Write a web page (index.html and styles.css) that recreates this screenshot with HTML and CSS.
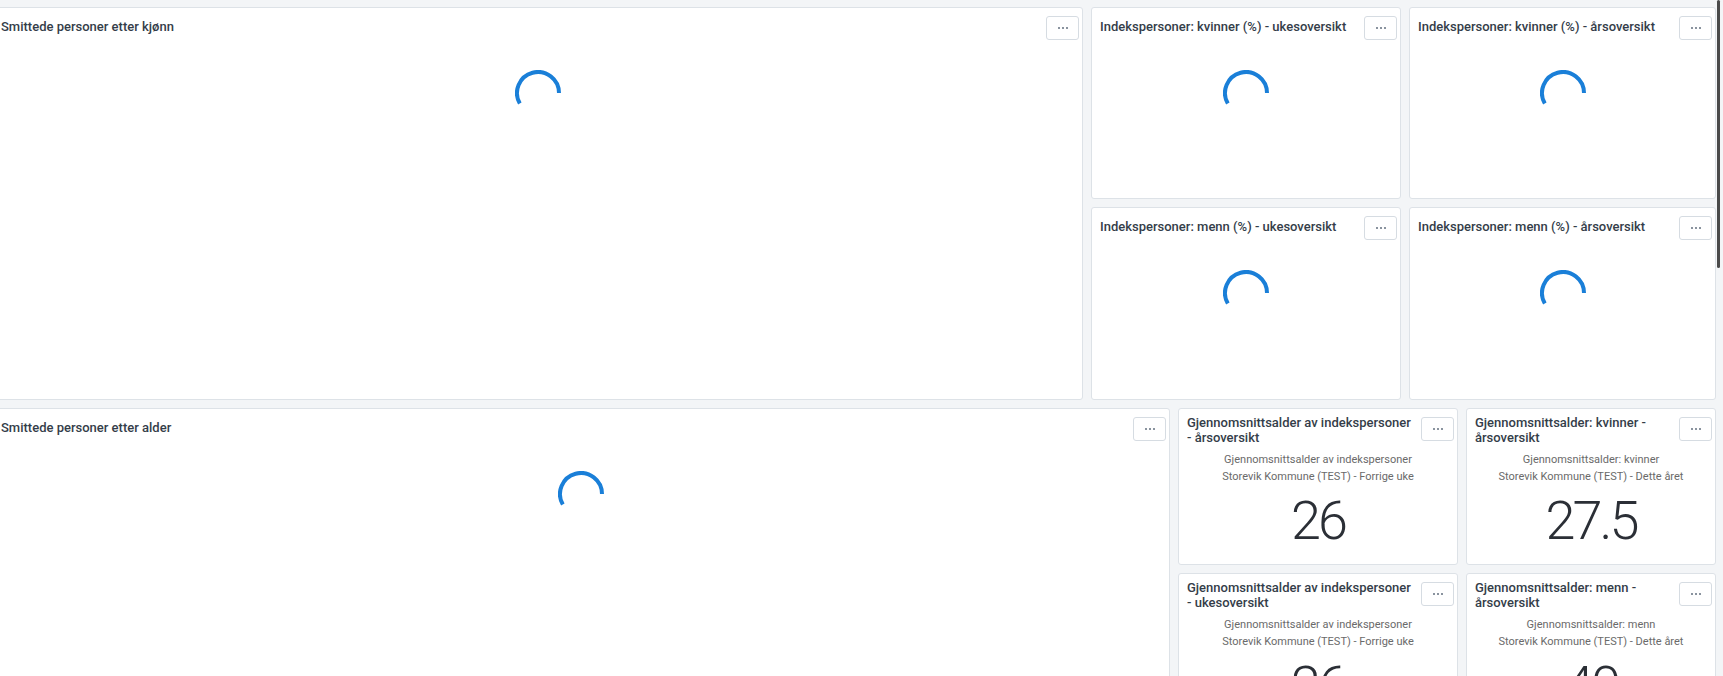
FILE: index.html
```html
<!DOCTYPE html>
<html lang="no">
<head>
<meta charset="utf-8">
<title>Dashboard</title>
<link rel="stylesheet" href="styles.css">
</head>
<body>
<main class="dash">
  <div class="row row-top">
    <section class="card">
      <header class="card-head">
        <h2 class="card-title">Smittede personer etter kjønn</h2>
        <button class="menu-btn" type="button"><svg width="12" height="4" viewBox="0 0 12 4"><circle cx="2" cy="2" r="1.1"/><circle cx="6" cy="2" r="1.1"/><circle cx="10" cy="2" r="1.1"/></svg></button>
      </header>
      <div class="card-body loading"><svg class="spinner" viewBox="0 0 46 46"><path d="M4.81 33.5 A21 21 0 1 1 44 23"/></svg></div>
    </section>
    <div class="quad quad-top">
      <section class="card">
        <header class="card-head">
          <h2 class="card-title">Indekspersoner: kvinner (%) - ukesoversikt</h2>
          <button class="menu-btn" type="button"><svg width="12" height="4" viewBox="0 0 12 4"><circle cx="2" cy="2" r="1.1"/><circle cx="6" cy="2" r="1.1"/><circle cx="10" cy="2" r="1.1"/></svg></button>
        </header>
        <div class="card-body loading"><svg class="spinner" viewBox="0 0 46 46"><path d="M4.81 33.5 A21 21 0 1 1 44 23"/></svg></div>
      </section>
      <section class="card">
        <header class="card-head">
          <h2 class="card-title">Indekspersoner: kvinner (%) - årsoversikt</h2>
          <button class="menu-btn" type="button"><svg width="12" height="4" viewBox="0 0 12 4"><circle cx="2" cy="2" r="1.1"/><circle cx="6" cy="2" r="1.1"/><circle cx="10" cy="2" r="1.1"/></svg></button>
        </header>
        <div class="card-body loading"><svg class="spinner" viewBox="0 0 46 46"><path d="M4.81 33.5 A21 21 0 1 1 44 23"/></svg></div>
      </section>
      <section class="card">
        <header class="card-head">
          <h2 class="card-title">Indekspersoner: menn (%) - ukesoversikt</h2>
          <button class="menu-btn" type="button"><svg width="12" height="4" viewBox="0 0 12 4"><circle cx="2" cy="2" r="1.1"/><circle cx="6" cy="2" r="1.1"/><circle cx="10" cy="2" r="1.1"/></svg></button>
        </header>
        <div class="card-body loading"><svg class="spinner" viewBox="0 0 46 46"><path d="M4.81 33.5 A21 21 0 1 1 44 23"/></svg></div>
      </section>
      <section class="card">
        <header class="card-head">
          <h2 class="card-title">Indekspersoner: menn (%) - årsoversikt</h2>
          <button class="menu-btn" type="button"><svg width="12" height="4" viewBox="0 0 12 4"><circle cx="2" cy="2" r="1.1"/><circle cx="6" cy="2" r="1.1"/><circle cx="10" cy="2" r="1.1"/></svg></button>
        </header>
        <div class="card-body loading"><svg class="spinner" viewBox="0 0 46 46"><path d="M4.81 33.5 A21 21 0 1 1 44 23"/></svg></div>
      </section>
    </div>
  </div>

  <div class="row row-bottom">
    <section class="card">
      <header class="card-head">
        <h2 class="card-title">Smittede personer etter alder</h2>
        <button class="menu-btn" type="button"><svg width="12" height="4" viewBox="0 0 12 4"><circle cx="2" cy="2" r="1.1"/><circle cx="6" cy="2" r="1.1"/><circle cx="10" cy="2" r="1.1"/></svg></button>
      </header>
      <div class="card-body loading"><svg class="spinner" viewBox="0 0 46 46"><path d="M4.81 33.5 A21 21 0 1 1 44 23"/></svg></div>
    </section>
    <div class="quad quad-bottom">
      <section class="card stat">
        <header class="card-head">
          <h2 class="card-title">Gjennomsnittsalder av indekspersoner - årsoversikt</h2>
          <button class="menu-btn" type="button"><svg width="12" height="4" viewBox="0 0 12 4"><circle cx="2" cy="2" r="1.1"/><circle cx="6" cy="2" r="1.1"/><circle cx="10" cy="2" r="1.1"/></svg></button>
        </header>
        <div class="card-body value-body">
          <p class="sub">Gjennomsnittsalder av indekspersoner<br>Storevik Kommune (TEST) - Forrige uke</p>
          <p class="value">26</p>
        </div>
      </section>
      <section class="card stat">
        <header class="card-head">
          <h2 class="card-title">Gjennomsnittsalder: kvinner - årsoversikt</h2>
          <button class="menu-btn" type="button"><svg width="12" height="4" viewBox="0 0 12 4"><circle cx="2" cy="2" r="1.1"/><circle cx="6" cy="2" r="1.1"/><circle cx="10" cy="2" r="1.1"/></svg></button>
        </header>
        <div class="card-body value-body">
          <p class="sub">Gjennomsnittsalder: kvinner<br>Storevik Kommune (TEST) - Dette året</p>
          <p class="value">27.5</p>
        </div>
      </section>
      <section class="card stat">
        <header class="card-head">
          <h2 class="card-title">Gjennomsnittsalder av indekspersoner - ukesoversikt</h2>
          <button class="menu-btn" type="button"><svg width="12" height="4" viewBox="0 0 12 4"><circle cx="2" cy="2" r="1.1"/><circle cx="6" cy="2" r="1.1"/><circle cx="10" cy="2" r="1.1"/></svg></button>
        </header>
        <div class="card-body value-body">
          <p class="sub">Gjennomsnittsalder av indekspersoner<br>Storevik Kommune (TEST) - Forrige uke</p>
          <p class="value">26</p>
        </div>
      </section>
      <section class="card stat">
        <header class="card-head">
          <h2 class="card-title">Gjennomsnittsalder: menn - årsoversikt</h2>
          <button class="menu-btn" type="button"><svg width="12" height="4" viewBox="0 0 12 4"><circle cx="2" cy="2" r="1.1"/><circle cx="6" cy="2" r="1.1"/><circle cx="10" cy="2" r="1.1"/></svg></button>
        </header>
        <div class="card-body value-body">
          <p class="sub">Gjennomsnittsalder: menn<br>Storevik Kommune (TEST) - Dette året</p>
          <p class="value">40</p>
        </div>
      </section>
    </div>
  </div>
</main>
<div class="scrollbar"><div class="scroll-thumb"></div></div>
</body>
</html>
```

FILE: styles.css
```css
html, body {
  margin: 0;
  padding: 0;
}

body {
  background: #f3f5f7;
  font-family: Roboto, "Noto Sans", "Liberation Sans", sans-serif;
  overflow: hidden;
  height: 676px;
}

.dash {
  width: 1724px;
  margin-left: -8px;
  padding-top: 7px;
  display: flex;
  flex-direction: column;
  gap: 8px;
}

.row {
  display: grid;
  gap: 8px;
}

.row-top {
  grid-template-columns: 1091px 1fr;
  height: 393px;
}

.row-bottom {
  grid-template-columns: 1178px 1fr;
  height: 322px;
}

.quad {
  display: grid;
  gap: 8px;
}

.quad-top {
  grid-template-columns: 310px 307px;
  grid-template-rows: 192px 193px;
}

.quad-bottom {
  grid-template-columns: 280px 250px;
  grid-template-rows: 157px 157px;
}

.card {
  box-sizing: border-box;
  background: #ffffff;
  border: 1px solid #dde2e7;
  border-radius: 3px;
  display: flex;
  flex-direction: column;
  overflow: hidden;
  min-width: 0;
}

.card-head {
  display: flex;
  align-items: flex-start;
  gap: 8px;
  padding: 4px 3px 0 8px;
}

.card-title {
  flex: 1;
  min-width: 0;
  margin: 7px 0 0;
  font-size: 13px;
  line-height: 15px;
  font-weight: 500;
  color: #343d49;
}

.stat .card-title {
  margin-top: 2px;
}

.menu-btn {
  flex: none;
  box-sizing: border-box;
  width: 33px;
  height: 24px;
  margin-top: 3.5px;
  padding: 0;
  border: 1px solid #d6dce2;
  border-radius: 3px;
  background: #ffffff;
  display: flex;
  align-items: center;
  justify-content: center;
}

.menu-btn svg {
  fill: #6e7a88;
  display: block;
}

.card-body.loading {
  display: flex;
  justify-content: center;
  padding-top: 30px;
}

.spinner {
  width: 46px;
  height: 46px;
  display: block;
}

.spinner path {
  fill: none;
  stroke: #1a7fd8;
  stroke-width: 4;
}

.value-body {
  text-align: center;
  padding-top: 6px;
}

.sub {
  margin: 0;
  font-size: 11px;
  line-height: 17px;
  color: #6a6a6a;
}

.value {
  margin: 9px 0 0;
  font-size: 54px;
  line-height: 54px;
  font-weight: 300;
  letter-spacing: -3px;
  color: #2b2f36;
}

.scrollbar {
  position: absolute;
  top: 0;
  right: 2px;
  width: 4px;
  height: 676px;
}

.scroll-thumb {
  width: 3px;
  height: 268px;
  background: #4a4a4a;
  border-radius: 2px;
}
```
